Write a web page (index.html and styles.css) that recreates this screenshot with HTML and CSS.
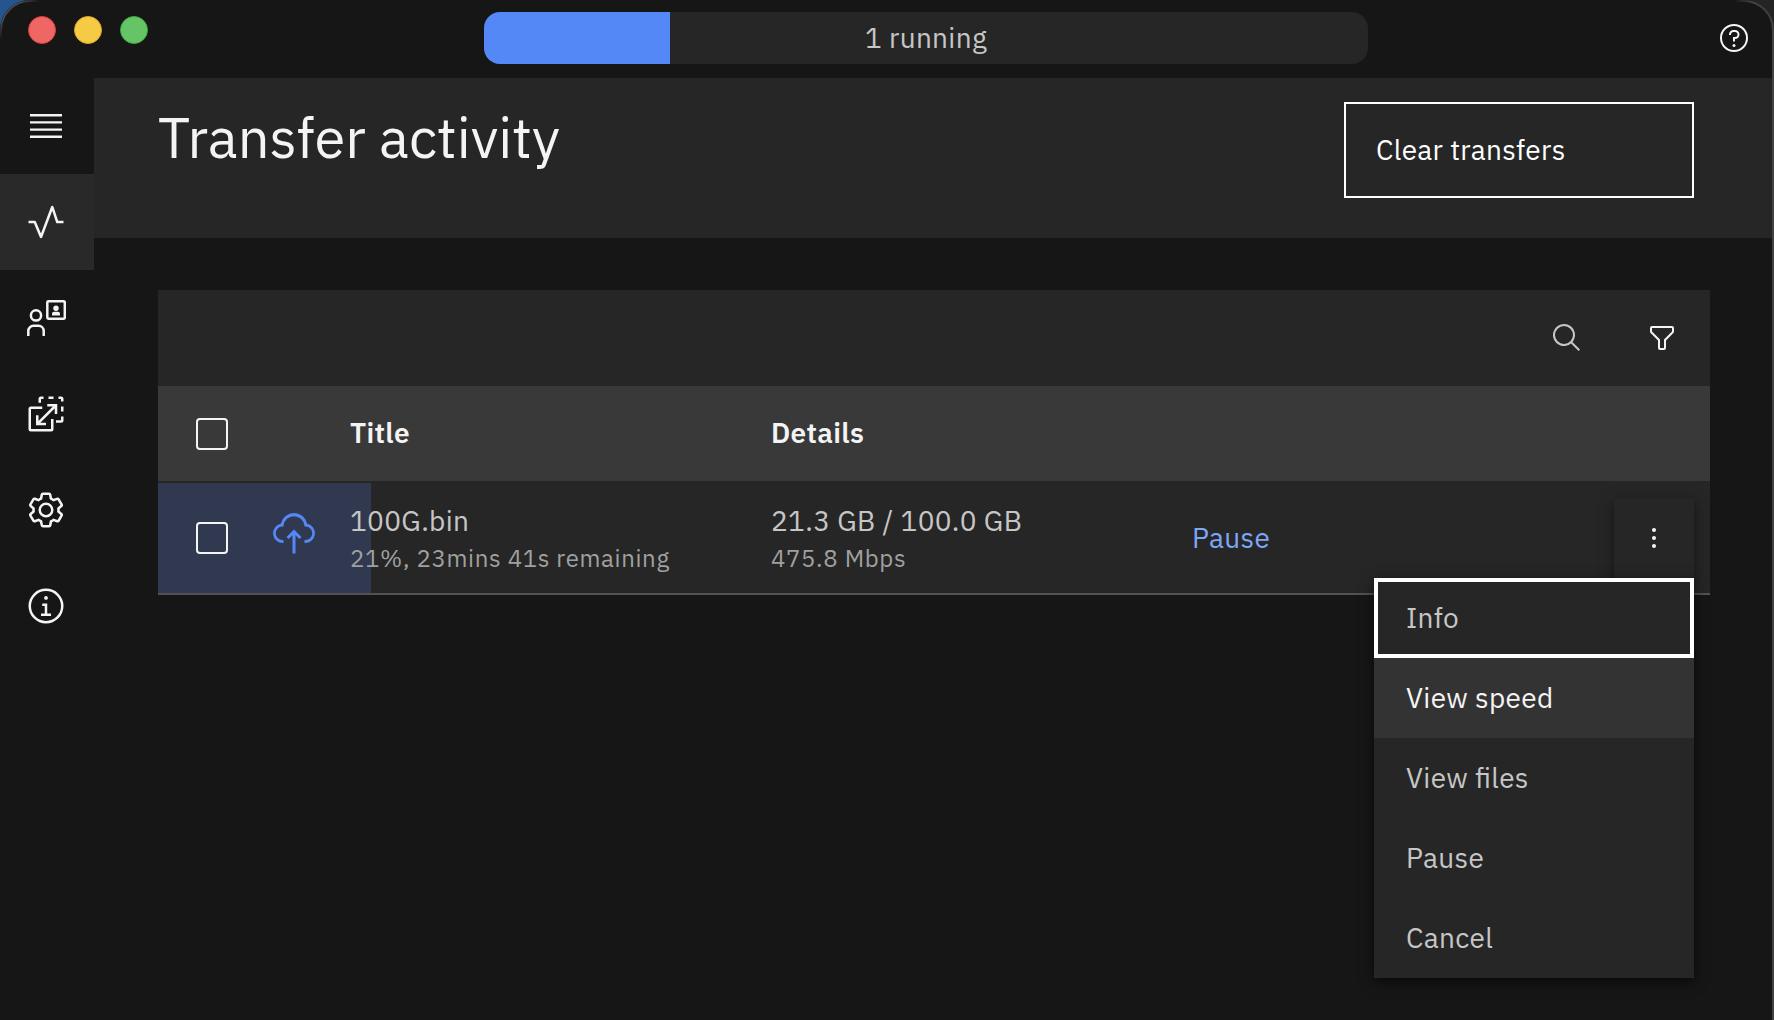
FILE: index.html
```
<!DOCTYPE html>
<html lang="en">
<head>
<meta charset="utf-8">
<title>Transfer activity</title>
<link rel="stylesheet" href="styles.css">
</head>
<body>
<div class="window">
  <header class="titlebar">
    <div class="lights"><span class="light red"></span><span class="light yellow"></span><span class="light green"></span></div>
    <div class="overall"><div class="overall-fill" style="width:21.04%"></div><span class="overall-label">1 running</span></div>
    <svg class="help" viewBox="0 0 32 32"><path d="M16,2A14,14,0,1,0,30,16,14,14,0,0,0,16,2Zm0,26A12,12,0,1,1,28,16,12,12,0,0,1,16,28Z"/><circle cx="16" cy="23.5" r="1.5"/><path d="M17,8H15.5A4.49,4.49,0,0,0,11,12.5V13h2v-.5A2.5,2.5,0,0,1,15.5,10H17a2.5,2.5,0,0,1,0,5H15v4.5h2V17a4.5,4.5,0,0,0,0-9Z"/></svg>
  </header>
  <div class="body">
    <nav class="rail">
      <a class="rail-item"><svg viewBox="0 0 20 20"><path d="M2 14.8h16V16H2zM2 11.2h16v1.2H2zM2 7.6h16v1.2H2zM2 4h16v1.2H2z"/></svg></a>
      <a class="rail-item active"><svg viewBox="0 0 32 32"><path d="M12,29a1,1,0,0,1-.92-.62L6.33,17H2V15H7a1,1,0,0,1,.92.62L12,25.28,20.06,3.65A1,1,0,0,1,21,3a1,1,0,0,1,.93.68L25.72,15H30v2H25a1,1,0,0,1-.95-.68L21,7,12.94,28.35A1,1,0,0,1,12,29Z"/></svg></a>
      <a class="rail-item"><svg viewBox="0 0 40 40"><g class="line"><circle cx="10" cy="17.4" r="5.1"/><path d="M2.3 38V33a5.2 5.2 0 0 1 5.2-5.2h5a5.2 5.2 0 0 1 5.2 5.2V38"/><rect x="21.3" y="3.3" width="17.5" height="17.5" rx="1.2"/></g><circle cx="30" cy="10.3" r="2.7"/><path d="M26 17.5v-1.7a2 2 0 0 1 2-2h4a2 2 0 0 1 2 2v1.7z"/></svg></a>
      <a class="rail-item"><svg viewBox="0 0 32 32"><g class="line thin"><path d="M13 11H4a1 1 0 0 0-1 1V28a1 1 0 0 0 1 1H20a1 1 0 0 0 1-1V20"/><path d="M11 7V4a1 1 0 0 1 1-1h2M18 3h4M26 3h2a1 1 0 0 1 1 1v2M29 10v4M29 18v3a1 1 0 0 1-1 1h-4"/><path d="M9.5 23.5 23 10M17 9h7v7M9 17v7h7"/></g></svg></a>
      <a class="rail-item"><svg viewBox="0 0 32 32"><path d="M27,16.76c0-.25,0-.5,0-.76s0-.51,0-.77l1.92-1.68A2,2,0,0,0,29.3,11L26.94,7a2,2,0,0,0-1.73-1,2,2,0,0,0-.64.1l-2.43.82a11.35,11.35,0,0,0-1.31-.75l-.51-2.52a2,2,0,0,0-2-1.61H13.64a2,2,0,0,0-2,1.61l-.51,2.52a11.48,11.48,0,0,0-1.32.75L7.43,6.06A2,2,0,0,0,6.79,6,2,2,0,0,0,5.06,7L2.7,11a2,2,0,0,0,.41,2.51L5,15.24c0,.25,0,.5,0,.76s0,.51,0,.77L3.11,18.45A2,2,0,0,0,2.7,21L5.06,25a2,2,0,0,0,1.73,1,2,2,0,0,0,.64-.1l2.43-.82a11.35,11.35,0,0,0,1.31.75l.51,2.52a2,2,0,0,0,2,1.61h4.72a2,2,0,0,0,2-1.61l.51-2.52a11.48,11.48,0,0,0,1.32-.75l2.42.82a2,2,0,0,0,.64.1,2,2,0,0,0,1.73-1L29.3,21a2,2,0,0,0-.41-2.51ZM25.21,24l-3.43-1.16a8.86,8.86,0,0,1-2.71,1.57L18.36,28H13.64l-.71-3.55a9.36,9.36,0,0,1-2.7-1.57L6.79,24,4.43,20l2.72-2.4a8.9,8.9,0,0,1,0-3.13L4.43,12,6.79,8l3.43,1.16a8.86,8.86,0,0,1,2.71-1.57L13.64,4h4.72l.71,3.55a9.36,9.36,0,0,1,2.7,1.57L25.21,8,27.57,12l-2.72,2.4a8.9,8.9,0,0,1,0,3.13L27.57,20Z"/><path d="M16,22a6,6,0,1,1,6-6A5.94,5.94,0,0,1,16,22Zm0-10a3.91,3.91,0,0,0-4,4,3.91,3.91,0,0,0,4,4,3.91,3.91,0,0,0,4-4A3.91,3.91,0,0,0,16,12Z"/></svg></a>
      <a class="rail-item"><svg viewBox="0 0 32 32"><path d="M17 22V14H13v2h2v6H12v2h8V22ZM16 8a1.5 1.5 0 1 0 1.5 1.5A1.5 1.5 0 0 0 16 8Z"/><path d="M16,30A14,14,0,1,1,30,16,14,14,0,0,1,16,30ZM16,4A12,12,0,1,0,28,16,12,12,0,0,0,16,4Z"/></svg></a>
    </nav>
    <main class="main">
      <section class="page-head">
        <h1 class="page-title">Transfer activity</h1>
        <button class="clear">Clear transfers</button>
      </section>
      <section class="table">
        <div class="toolbar">
          <svg class="search" viewBox="0 0 32 32"><path d="M29,27.5859l-7.5521-7.5521a11.0177,11.0177,0,1,0-1.4141,1.4141L27.5859,29ZM4,13a9,9,0,1,1,9,9A9.01,9.01,0,0,1,4,13Z"/></svg>
          <svg viewBox="0 0 32 32"><path d="M18,28H14a2,2,0,0,1-2-2V18.41L4.59,11A2,2,0,0,1,4,9.59V6A2,2,0,0,1,6,4H26a2,2,0,0,1,2,2V9.59A2,2,0,0,1,27.41,11L20,18.41V26A2,2,0,0,1,18,28ZM6,6V9.59l8,8V26h4V17.59l8-8V6Z"/></svg>
        </div>
        <div class="row head"><span class="check"></span><span></span><span class="label">Title</span><span class="label">Details</span></div>
        <div class="row item">
          <span class="check"></span>
          <svg class="upload" viewBox="0 0 32 32"><path d="M11 18 12.41 19.41 15 16.83 15 29 17 29 17 16.83 19.59 19.41 21 18 16 13 11 18z"/><path d="M23.5,22H23V20h.5a4.5,4.5,0,0,0,.36-9L23,11l-.1-.82a7,7,0,0,0-13.88,0L9,11,8.14,11a4.5,4.5,0,0,0,.36,9H9v2H8.5A6.5,6.5,0,0,1,7.2,9.14a9,9,0,0,1,17.6,0A6.5,6.5,0,0,1,23.5,22Z"/></svg>
          <div class="cell"><span class="main-line">100G.bin</span><span class="sub-line">21%, 23mins 41s remaining</span></div>
          <div class="cell"><span class="main-line">21.3 GB / 100.0 GB</span><span class="sub-line">475.8 Mbps</span></div>
          <a class="pause label">Pause</a>
          <div class="overflow">
            <svg viewBox="0 0 32 32"><circle cx="16" cy="8" r="2"/><circle cx="16" cy="16" r="2"/><circle cx="16" cy="24" r="2"/></svg>
            <div class="menu">
              <a class="option focused">Info</a>
              <a class="option hovered">View speed</a>
              <a class="option">View files</a>
              <a class="option">Pause</a>
              <a class="option">Cancel</a>
            </div>
          </div>
        </div>
      </section>
    </main>
  </div>
</div>
</body>
</html>
```
FILE: styles.css
```
* { box-sizing: border-box; }
body { margin: 0; background: linear-gradient(90deg, #24558f 0 50%, #242424 50%); font-family: "IBM Plex Sans", Roboto, "Liberation Sans", sans-serif; font-size: 28px; letter-spacing: .32px; font-feature-settings: "liga" 1; color: #f4f4f4; }
svg { display: block; fill: #f4f4f4; }
span, a, h1 { white-space: nowrap; }

.window { position: relative; width: 1774px; height: 1020px; background: #161616; border-radius: 30px 30px 0 0; border-right: 2px solid #434343; overflow: hidden; display: flex; flex-direction: column; }
/* light rim that follows the rounded top corners */
.window::after { content: ""; position: absolute; inset: 0 -2px 0 0; border: 2px solid #4a4a4a; border-radius: 30px 30px 0 0; pointer-events: none; -webkit-mask: radial-gradient(circle at 0 0, #000 20px, transparent 40px), radial-gradient(circle at 100% 0, #000 20px, transparent 40px); mask: radial-gradient(circle at 0 0, #000 20px, transparent 40px), radial-gradient(circle at 100% 0, #000 20px, transparent 40px); }
.titlebar { height: 78px; display: flex; padding: 12px 22px 0 28px; }
.lights { display: flex; gap: 18px; width: 456px; padding-top: 4px; }
.light { width: 28px; height: 28px; border-radius: 50%; border: 1px solid; }
.red { background: #ee6765; border-color: #d8403f; }
.yellow { background: #f5ca44; border-color: #d9a92a; }
.green { background: #65c466; border-color: #3fa83f; }
.overall { position: relative; width: 884px; height: 52px; border-radius: 16px; background: #262626; overflow: hidden; }
.overall-fill { height: 100%; background: #5588f7; }
.overall-label { position: absolute; inset: 0; display: flex; align-items: center; justify-content: center; padding-bottom: 2px; color: #c6c6c6; }
.help { width: 32px; height: 32px; margin: 10px 0 0 350px; }

.body { flex: 1; display: flex; }
.rail { width: 94px; }
.rail-item { height: 96px; display: flex; align-items: center; padding-left: 26px; }
.rail-item svg { width: 40px; height: 40px; }
.rail-item.active { background: #292929; }
.line { fill: none; stroke: #f4f4f4; stroke-width: 2.5; }
.thin { stroke-width: 2; }

.main { flex: 1; }
.page-head { height: 160px; background: #262626; display: flex; justify-content: space-between; padding: 24px 78px 0 64px; }
.page-title { margin: 3px 0 0; font-size: 56px; font-weight: 400; line-height: 64px; letter-spacing: 0; }
.clear { width: 350px; height: 96px; border: 2px solid #fff; background: none; color: #fff; font: inherit; letter-spacing: inherit; text-align: left; padding: 0 30px 2px; }

.table { margin: 52px 62px 0 64px; }
.toolbar { height: 96px; background: #262626; display: flex; align-items: center; justify-content: flex-end; gap: 63px; padding-right: 32px; }
.toolbar svg { width: 32px; height: 32px; }
.toolbar .search { fill: #c6c6c6; }
.row { display: grid; grid-template-columns: 74px 80px 421px 421px 422px 80px; align-items: center; padding-left: 38px; }
.head { height: 95px; background: #393939; font-weight: 600; }
.label { padding-bottom: 2px; }
.check { width: 32px; height: 32px; border: 2px solid #f4f4f4; border-radius: 4px; }
.item { height: 114px; border-top: 2px solid #262626; border-bottom: 2px solid #525252; background: linear-gradient(90deg, #30394f 213px, #262626 213px); }
.upload { width: 48px; height: 48px; margin-top: -8px; fill: #5588f7; }
.cell { display: flex; flex-direction: column; color: #c6c6c6; }
.main-line { line-height: 40px; }
.sub-line { font-size: 24px; line-height: 34px; letter-spacing: .64px; color: #a0a0a0; }
.pause { color: #7ea6f8; }

.overflow { position: relative; width: 80px; height: 80px; background: #262626; display: flex; align-items: center; justify-content: center; box-shadow: 0 4px 12px rgba(0,0,0,.5); }
.overflow > svg { width: 32px; height: 32px; }
.menu { position: absolute; right: 0; top: 80px; width: 320px; background: #262626; box-shadow: 0 4px 12px rgba(0,0,0,.6); }
.option { height: 80px; display: flex; align-items: center; padding: 0 32px 2px; color: #c6c6c6; }
.focused { box-shadow: inset 0 0 0 4px #fff; }
.hovered { background: #333; color: #f4f4f4; }
```
